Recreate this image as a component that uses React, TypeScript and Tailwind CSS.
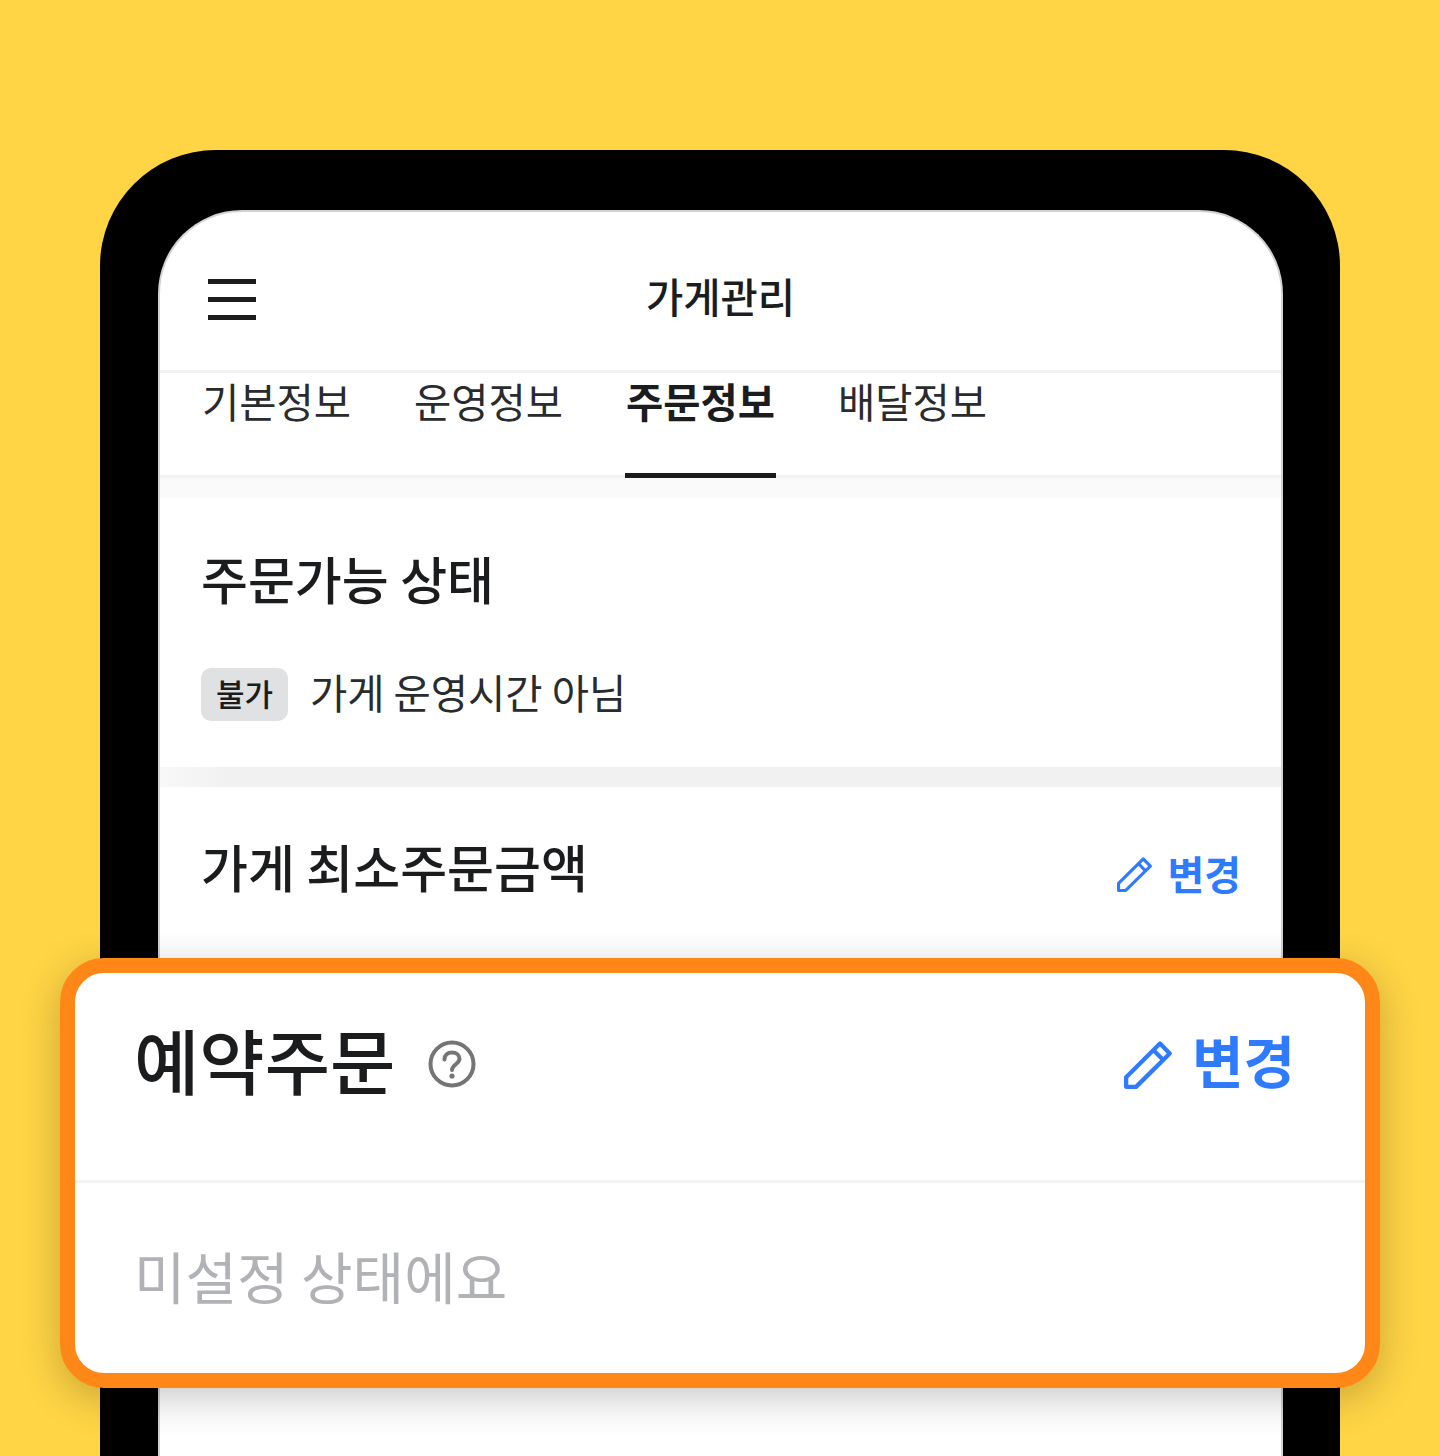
const font = { fontFamily: '"Noto Sans CJK KR", "Noto Sans", sans-serif' };

function Pencil({ className }: { className: string }) {
  return (
    <svg viewBox="0 0 36 36" fill="none" stroke="currentColor" strokeWidth="3.2" strokeLinejoin="round" className={className}>
      <path d="M1.6 27.2L27 1.9L34.3 9.4L9 34.4H1.6V27.2Z" />
      <path d="M22 6.8L29.4 14.2" />
    </svg>
  );
}

function Help() {
  return (
    <svg viewBox="0 0 48 48" fill="none" stroke="#757575" strokeWidth="4" className="mt-[12px] h-12 w-12">
      <circle cx="24" cy="24" r="21.5" />
      <path d="M16.5 19.5C16.5 15 19.8 12.5 24 12.5C28.2 12.5 31.5 15 31.5 18.8C31.5 24 24 24.5 24 30" strokeLinecap="round" />
      <circle cx="24" cy="36" r="2.6" fill="#757575" stroke="none" />
    </svg>
  );
}

const tabs = ["기본정보", "운영정보", "주문정보", "배달정보"];

export default function App() {
  return (
    <div style={font} className="relative h-[1456px] w-[1440px] overflow-hidden bg-[#ffd445] px-[100px] pt-[150px] text-[#1b1c1e]">
      <div className="h-full rounded-t-[116px] bg-black pl-[58px] pr-[57px] pt-[60px]">
        <div className="h-full overflow-hidden rounded-t-[84px] border-2 border-b-0 border-[#d2d2d2] bg-white">
          <header className="relative flex h-[161px] items-center justify-center border-b-[3px] border-[#f2f2f2] pt-[10px]">
            <div className="absolute left-[48px] top-[67px] flex w-[48px] flex-col gap-[13px]">
              <span className="h-[5px] bg-[#1b1c1e]" />
              <span className="h-[5px] bg-[#1b1c1e]" />
              <span className="h-[5px] bg-[#1b1c1e]" />
            </div>
            <h1 className="text-[40.5px] font-medium leading-none">가게관리</h1>
          </header>
          <nav className="flex h-[105px] gap-[61px] border-b-[3px] border-[#f2f2f2] pl-[41px]">
            {tabs.map((t, i) => (
              <div key={t} className={`relative w-[151px] pt-[3px] text-center text-[40.5px] leading-[50px] ${i === 2 ? "font-bold" : "font-normal text-[#2a2b2d]"}`}>
                {t}
                {i === 2 && <span className="absolute bottom-[-3px] left-0 h-[5px] w-full bg-[#1b1c1e]" />}
              </div>
            ))}
          </nav>
          <div className="h-[20px] bg-[#fafafa]" />
          <section className="h-[269px] px-[41px] pt-[47px]">
            <h2 className="text-[51px] font-medium leading-[66px]">주문가능 상태</h2>
            <div className="mt-[56px] flex items-center gap-[22px]">
              <span className="flex h-[53px] w-[87px] items-center justify-center rounded-[10px] bg-[#e0e1e3] pb-[3px] text-[31px] font-medium">불가</span>
              <span className="mb-[5px] text-[40.5px] leading-[50px] text-[#2a2b2d]">가게 운영시간 아님</span>
            </div>
          </section>
          <div className="h-[20px] bg-gradient-to-r from-[#f8f8f8] to-[#f1f1f1] to-[6%]" />
          <section className="flex items-start justify-between pl-[41px] pr-[40px] pt-[46px]">
            <h2 className="text-[51px] font-medium leading-[66px]">가게 최소주문금액</h2>
            <div className="mt-[15px] flex items-center gap-[15px] text-[#2f7bff]">
              <Pencil className="mt-[2px] h-[35px] w-[35px]" />
              <span className="text-[40px] font-bold leading-[50px]">변경</span>
            </div>
          </section>
        </div>
      </div>
      <div className="absolute left-[60px] top-[958px] h-[430px] w-[1320px] rounded-[44px] border-[15px] border-[#ff8717] bg-white shadow-[0_10px_40px_rgba(0,0,0,0.22)]">
        <div className="flex h-[210px] items-start justify-between border-b-[3px] border-[#f2f2f2] pl-[59px] pr-[70px] pt-[40px]">
          <div className="flex items-center gap-[33px]">
            <h2 className="text-[71px] font-medium leading-[90px]">예약주문</h2>
            <Help />
          </div>
          <div className="mt-[11px] flex items-center gap-[20px] text-[#2f7bff]">
            <Pencil className="mt-[12px] h-[48px] w-[48px]" />
            <span className="text-[56px] font-bold leading-[70px]">변경</span>
          </div>
        </div>
        <p className="pl-[59px] pt-[56px] text-[56px] leading-[72px] text-[#b0b2b5]">미설정 상태에요</p>
      </div>
    </div>
  );
}
